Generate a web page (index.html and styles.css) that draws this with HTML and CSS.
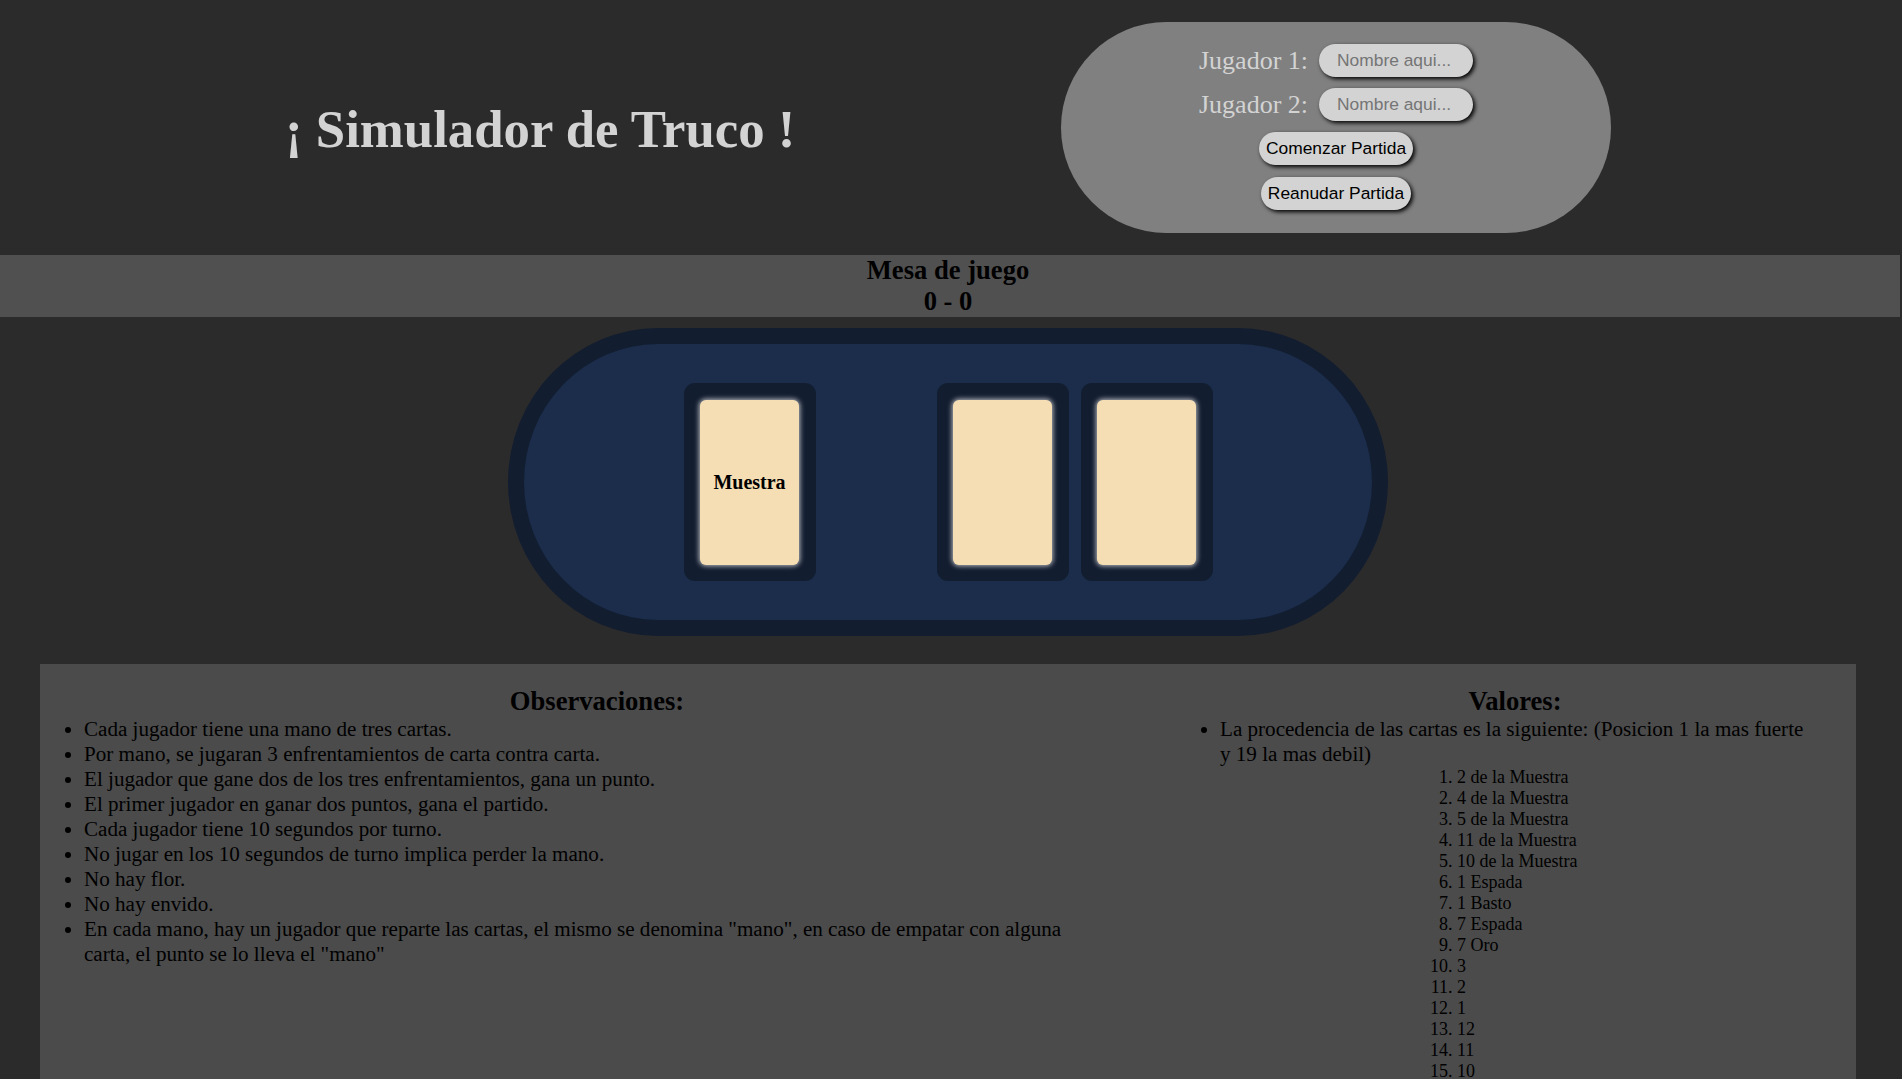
FILE: index.html
```html
<!DOCTYPE html>
<html lang="es">
<head>
<meta charset="utf-8">
<title>Simulador de Truco</title>
<link rel="stylesheet" href="styles.css">
</head>
<body>
<header class="header">
  <h1 class="title">¡ Simulador de Truco !</h1>
  <div class="setup">
    <div class="player-row">
      <label class="player-label">Jugador 1:</label>
      <input class="player-input" type="text" placeholder="Nombre aqui...">
    </div>
    <div class="player-row">
      <label class="player-label">Jugador 2:</label>
      <input class="player-input" type="text" placeholder="Nombre aqui...">
    </div>
    <button class="btn">Comenzar Partida</button>
    <button class="btn">Reanudar Partida</button>
  </div>
</header>

<section class="scorebar">
  <div class="scorebar-line">Mesa de juego</div>
  <div class="scorebar-line">0 - 0</div>
</section>

<div class="mesa">
  <div class="slot slot-muestra"><div class="card">Muestra</div></div>
  <div class="slot"><div class="card"></div></div>
  <div class="slot"><div class="card"></div></div>
</div>

<section class="info">
  <ul class="col col-left">
    <h2 class="col-title">Observaciones:</h2>
    <li>Cada jugador tiene una mano de tres cartas.</li>
    <li>Por mano, se jugaran 3 enfrentamientos de carta contra carta.</li>
    <li>El jugador que gane dos de los tres enfrentamientos, gana un punto.</li>
    <li>El primer jugador en ganar dos puntos, gana el partido.</li>
    <li>Cada jugador tiene 10 segundos por turno.</li>
    <li>No jugar en los 10 segundos de turno implica perder la mano.</li>
    <li>No hay flor.</li>
    <li>No hay envido.</li>
    <li>En cada mano, hay un jugador que reparte las cartas, el mismo se denomina "mano", en caso de empatar con alguna carta, el punto se lo lleva el "mano"</li>
  </ul>
  <ul class="col col-right">
    <h2 class="col-title">Valores:</h2>
    <li>La procedencia de las cartas es la siguiente: (Posicion 1 la mas fuerte y 19 la mas debil)
      <ol class="ranking">
        <li>2 de la Muestra</li>
        <li>4 de la Muestra</li>
        <li>5 de la Muestra</li>
        <li>11 de la Muestra</li>
        <li>10 de la Muestra</li>
        <li>1 Espada</li>
        <li>1 Basto</li>
        <li>7 Espada</li>
        <li>7 Oro</li>
        <li>3</li>
        <li>2</li>
        <li>1</li>
        <li>12</li>
        <li>11</li>
        <li>10</li>
        <li>7</li>
        <li>6</li>
        <li>5</li>
        <li>4</li>
      </ol>
    </li>
  </ul>
</section>
</body>
</html>
```

FILE: styles.css
```css
html, body {
  margin: 0;
  padding: 0;
}
body {
  background: #2b2b2b;
  font-family: "Liberation Serif", "Times New Roman", serif;
  color: #000;
  width: 1902px;
}

.header {
  display: flex;
  align-items: center;
  justify-content: space-between;
  padding: 22px 291px 22px 285px;
}
.title {
  margin: 4px 0 0 0;
  font-size: 52.8px;
  font-weight: bold;
  color: #d3d3d3;
  line-height: 1.15;
}
.setup {
  width: 550px;
  height: 211px;
  box-sizing: border-box;
  background: #808080;
  border-radius: 106px;
  display: flex;
  flex-direction: column;
  align-items: center;
  padding-top: 22px;
}
.player-row {
  display: flex;
  align-items: center;
  gap: 11px;
  margin-bottom: 11px;
}
.player-label {
  font-size: 26px;
  color: #d3d3d3;
  line-height: 30px;
}
.player-input {
  width: 154px;
  height: 33px;
  box-sizing: border-box;
  border: none;
  border-radius: 17px;
  background: #d3d3d3;
  padding: 0 0 0 18px;
  font-family: "Liberation Sans", Arial, sans-serif;
  font-size: 17.4px;
  color: #000;
  box-shadow: 2px 2px 4px #000;
  outline: none;
}
.player-input::placeholder {
  color: #757575;
}
.btn {
  height: 33px;
  box-sizing: border-box;
  border: none;
  border-radius: 17px;
  background: #d3d3d3;
  padding: 0 7px;
  font-family: "Liberation Sans", Arial, sans-serif;
  font-size: 17.4px;
  color: #000;
  box-shadow: 2px 2px 4px #000;
  margin-top: 0;
  margin-bottom: 12px;
}

.scorebar {
  width: 1900px;
  box-sizing: border-box;
  padding-right: 4px;
  background: #505050;
  text-align: center;
  font-weight: bold;
  font-size: 26.6px;
}
.scorebar-line {
  line-height: 31px;
}

.mesa {
  width: 880px;
  height: 308px;
  box-sizing: border-box;
  margin: 11px 0 0 508px;
  border: 16px solid #121d30;
  background: #1b2d4a;
  border-radius: 150px / 154px;
  display: flex;
  align-items: center;
  justify-content: center;
  gap: 12px;
}
.slot {
  width: 132px;
  height: 198px;
  box-sizing: border-box;
  background: #121d30;
  border-radius: 11px;
  display: flex;
  align-items: center;
  justify-content: center;
}
.slot-muestra {
  margin-right: 109px;
}
.card {
  width: 99px;
  height: 165px;
  background: #f5deb3;
  border-radius: 6px;
  box-shadow: 0 0 5px 1px rgba(230, 230, 230, 0.8);
  display: flex;
  align-items: center;
  justify-content: center;
  font-weight: bold;
  font-size: 20px;
  color: #000;
}

.info {
  margin: 28px 0 0 40px;
  width: 1816px;
  min-height: 560px;
  box-sizing: border-box;
  background: #4b4b4b;
  padding: 22px 0 0 4px;
  display: flex;
}
.col {
  margin: 0;
  padding-left: 40px;
  box-sizing: border-box;
  font-size: 21.1px;
  line-height: 25px;
}
.col-left {
  width: 1066px;
}
.col-right {
  width: 630px;
  margin-left: 70px;
}
.col-title {
  margin: 0;
  text-align: center;
  font-size: 26.6px;
  line-height: 30.5px;
  font-weight: bold;
}
.ranking {
  margin: 0 0 0 197px;
  padding-left: 40px;
  font-size: 18px;
  line-height: 21px;
}
```
